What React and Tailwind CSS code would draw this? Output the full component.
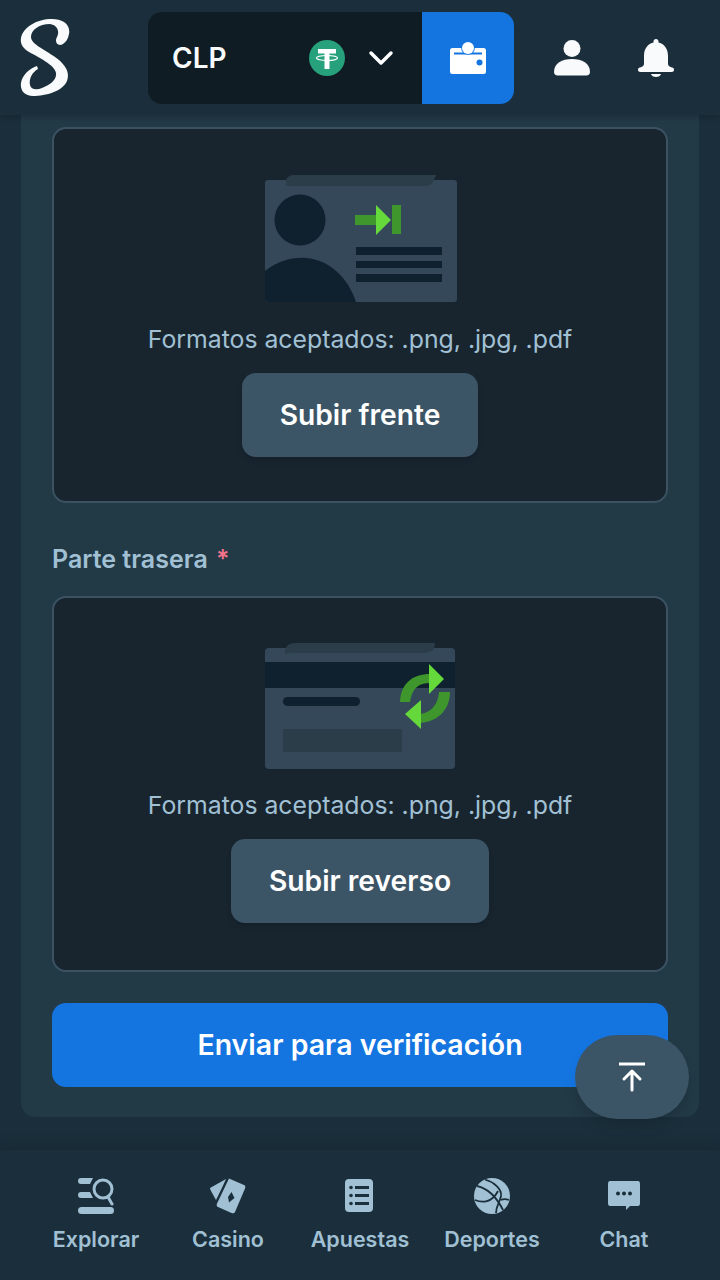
import React from 'react'

const Logo = () => (
  <svg width="50" height="78" viewBox="20 19 50 78" fill="#f8fafc">
    <path d="M63 44 C58 47 54 42 57 37 C60 31 57 25 50 24 C39 24 31 30 31 37 C31 44 44 49 55 57 C66 65 70 72 67 81 C63 91 46 96 33 96 C24 96 20 90 21 83 C22 75 30 68 37 66 L38 69 C31 73 29 80 30 85 C31 90 37 90 42 88 C50 85 57 80 56 73 C55 65 38 57 29 52 C23 48 20 44 21 38 C23 27 37 19 52 19 C62 19 71 24 69 34 C68 39 66 42 63 44 Z" />
  </svg>
)

const TetherIcon = () => (
  <svg width="36" height="36" viewBox="0 0 36 36">
    <circle cx="18" cy="18" r="18" fill="#26a17b" />
    <path d="M9 9h18v4.500h-6.500V29h-5V13.500H9z" fill="#fff" />
    <ellipse cx="18" cy="18" rx="10.500" ry="2.500" fill="none" stroke="#fff" strokeWidth="1.200" />
  </svg>
)

const WalletIcon = () => (
  <svg width="36" height="32" viewBox="0 0 36 32">
    <rect x="0" y="6" width="36" height="26" rx="2.500" fill="#fff" />
    <rect x="4" y="10.500" width="28" height="2" fill="#1475e1" />
    <circle cx="18" cy="6" r="6.800" fill="#1475e1" />
    <circle cx="18" cy="6" r="6" fill="#fff" />
    <circle cx="29.500" cy="20.500" r="3" fill="#1475e1" />
  </svg>
)

const UserIcon = () => (
  <svg width="36" height="36" viewBox="0 0 36 36" fill="#f8fafc">
    <circle cx="18" cy="8.500" r="8.500" />
    <path d="M0 32c0-9 8-13 18-13s18 4 18 13c0 2-1.500 3.500-3.500 3.500h-29C1.500 35.500 0 34 0 32z" />
  </svg>
)

const BellIcon = () => (
  <svg width="36" height="38" viewBox="0 0 36 38" fill="#f8fafc">
    <path d="M18 0c1.500 0 2.500 1 2.500 2.500v1C27 5 30 10.500 30 17v8c0 2 2 3 4 3.500 1.500.4 2 1.200 2 2.200 0 1.300-1 2.300-2.300 2.300H2.300C1 33 0 32 0 30.700c0-1 .5-1.800 2-2.200C4 28 6 27 6 25v-8C6 10.500 9 5 15.500 3.500v-1C15.500 1 16.500 0 18 0z" />
    <path d="M13 35h10c-.5 2-2.500 3-5 3s-4.500-1-5-3z" />
  </svg>
)

const IdFront = () => (
  <svg width="194" height="128" viewBox="-1 0 194 128">
    <rect x="1" y="6" width="192" height="122" rx="3" fill="#344859" />
    <path d="M22 6 Q24 1 30 1 H172 L169 8 Q167 12 160 12 H22z" fill="#2b3d48" />
    <circle cx="36" cy="46" r="25.500" fill="#0f212e" />
    <path d="M1 115 V97 C14 87 28 83 42 84 C66 86 84 104 92 128 H4 Q1 128 1 125z" fill="#0f212e" />
    <rect x="91" y="41" width="23" height="10" fill="#3e962c" />
    <path d="M112 31 L127 46 L112 61z" fill="#65d83c" />
    <rect x="128" y="31" width="9" height="29" fill="#3e962c" />
    <rect x="92" y="73" width="86" height="8" fill="#0f212e" />
    <rect x="92" y="87" width="86" height="7" fill="#0f212e" />
    <rect x="92" y="100" width="86" height="8" fill="#0f212e" />
  </svg>
)

const IdBack = () => (
  <svg width="194" height="128" viewBox="0 0 194 128">
    <rect x="2" y="6" width="190" height="121" rx="4" fill="#344859" />
    <path d="M22 12 V8 Q24 1 32 1 H172 L171 7 Q167 11 160 11 H28z" fill="#2b3d48" />
    <rect x="2" y="20" width="190" height="26" fill="#0f212e" />
    <rect x="20" y="55" width="77" height="9" rx="4.500" fill="#0f212e" />
    <rect x="20" y="87" width="119" height="23" fill="#2b3d48" />
    <path d="M137 60 C138 41 150 32 167 32 V41 C156 41 149 46 147 60z" fill="#3e962c" />
    <path d="M166 22 L181 37 L166 52z" fill="#65d83c" />
    <path d="M187 50 C187 70 172 81 155 81 V72 C165 72 175 65 176 50z" fill="#3e962c" />
    <path d="M158 58 L142 72 L158 87z" fill="#65d83c" />
  </svg>
)

const ExploreIcon = () => (
  <svg width="36" height="36" viewBox="0 0 36 36" fill="#a1c0d4">
    <path d="M3 0 H15 L12 6 H3 A3 3 0 0 1 3 0z" />
    <path d="M3 14 H12 L15 20 H3 A3 3 0 0 1 3 14z" />
    <rect x="0" y="29" width="36" height="7" rx="3.500" />
    <circle cx="25" cy="11" r="9" fill="none" stroke="#a1c0d4" strokeWidth="3" />
    <path d="M30 19 L34 26" stroke="#a1c0d4" strokeWidth="3" strokeLinecap="round" />
  </svg>
)

const CasinoIcon = () => (
  <svg width="36" height="36" viewBox="0 0 36 36" fill="#a1c0d4">
    <path d="M0 10 L16 1 Q12 10 6 22 L1 13 Q0 11 0 10z" />
    <path d="M19 .5 L34 7 Q36 8 35 10.500 L25 34 Q24 36 21.500 35 L8 29 Q6 28 7 25.500z" />
    <path d="M21.500 14 L24.500 20 L19 24.500 L18 19z" fill="#1a2f3b" />
  </svg>
)

const BetsIcon = () => (
  <svg width="30" height="34" viewBox="0 0 30 34">
    <rect x="0" y="0" width="28" height="33" rx="4" fill="#a1c0d4" />
    <g fill="#1a2f3b">
      <circle cx="6" cy="8.500" r="1.800" />
      <circle cx="6" cy="16.500" r="1.800" />
      <circle cx="6" cy="24.500" r="1.800" />
      <rect x="10" y="7" width="14" height="3" />
      <rect x="10" y="15" width="14" height="3" />
      <rect x="10" y="23" width="14" height="3" />
    </g>
  </svg>
)

const SportsIcon = () => (
  <svg width="36" height="36" viewBox="0 0 36 36">
    <circle cx="18" cy="18" r="18" fill="#a1c0d4" />
    <g fill="none" stroke="#1a2f3b" strokeWidth="1.800">
      <path d="M3 8 C12 10 22 18 29 32" />
      <path d="M11 1.500 C20 4 28 11 27 18 C26 24 22 28 22 35" />
      <path d="M1 22 C8 25 18 25 24 13" />
      <path d="M35 22 C32 21 29 21 27 22" />
    </g>
  </svg>
)

const ChatIcon = () => (
  <svg width="34" height="30" viewBox="0 0 34 30">
    <path d="M3 0 H31 Q33 0 33 3 V22 Q33 25 31 25 H23 L19 29 V25 H3 Q1 25 1 22 V3 Q1 0 3 0z" fill="#a1c0d4" />
    <circle cx="11" cy="12.500" r="2" fill="#1a2f3b" />
    <circle cx="17" cy="12.500" r="2" fill="#1a2f3b" />
    <circle cx="23" cy="12.500" r="2" fill="#1a2f3b" />
  </svg>
)

const NavItem = ({ icon, label }) => (
  <div className="flex w-[132px] flex-col items-center">
    <div className="flex h-[36px] items-center justify-center">{icon}</div>
    <span className="mt-[11px] text-[21.500px] leading-[28px] font-semibold text-[#a1c0d4]">{label}</span>
  </div>
)

const UploadBox = ({ art, button, top, gap }) => (
  <div className={`flex h-[376px] w-full flex-col items-center rounded-[14px] border-2 border-[#3a5261] bg-[#18252f] ${top}`}>
    {art}
    <p className={`text-[24.800px] leading-[34px] text-[#a1c0d4] ${gap}`}>Formatos aceptados: .png, .jpg, .pdf</p>
    <button className="mt-[17px] h-[84px] rounded-[14px] bg-[#3c5566] px-[38px] text-[28.200px] font-semibold text-white shadow-md">
      {button}
    </button>
  </div>
)

export default function App() {
  return (
    <div className="relative flex h-[1280px] w-[720px] flex-col overflow-hidden bg-[#1a2f3b] font-['Inter',sans-serif]">
      <header className="z-10 flex h-[115px] shrink-0 items-center bg-[#1a2f3b] pt-[1px] shadow-md">
        <div className="ml-[20px] w-[128px]"><Logo /></div>
        <div className="flex h-[92px] w-[366px] overflow-hidden rounded-[14px]">
          <div className="flex flex-1 items-center bg-[#0f1c24] pl-[24px]">
            <span className="w-[137px] text-[28px] font-semibold text-[#f8fafc]">CLP</span>
            <TetherIcon />
            <svg className="ml-[22px]" width="28" height="18" viewBox="0 0 28 18" fill="none" stroke="#fff" strokeWidth="3.500" strokeLinecap="round" strokeLinejoin="round">
              <path d="M4 4 L14 14 L24 4" />
            </svg>
          </div>
          <div className="flex w-[92px] items-center justify-center bg-[#1475e1]"><WalletIcon /></div>
        </div>
        <div className="ml-[40px]"><UserIcon /></div>
        <div className="ml-[48px]"><BellIcon /></div>
      </header>

      <main className="mx-[21px] shrink-0 rounded-b-[14px] bg-[#223946] px-[31px] pt-[12px] pb-[30px]">
        <UploadBox art={<IdFront />} button="Subir frente" top="pt-[45px]" gap="mt-[20px]" />
        <p className="mt-[39px] mb-[20px] text-[25px] leading-[34px] font-semibold text-[#a1c0d4]">
          Parte trasera <span className="ml-[2px] text-[#f0728a]">*</span>
        </p>
        <UploadBox art={<IdBack />} button="Subir reverso" top="pt-[44px]" gap="mt-[18px]" />
        <button className="mt-[31px] h-[84px] w-full rounded-[14px] bg-[#1475e1] text-[28.500px] font-semibold text-white">
          Enviar para verificación
        </button>
      </main>

      <nav className="z-10 mt-[33px] flex h-[130px] items-start justify-center bg-[#1a2f3b] pt-[28px] shadow-[0_-6px_12px_rgba(0,0,0,0.12)]">
        <NavItem icon={<ExploreIcon />} label="Explorar" />
        <NavItem icon={<CasinoIcon />} label="Casino" />
        <NavItem icon={<BetsIcon />} label="Apuestas" />
        <NavItem icon={<SportsIcon />} label="Deportes" />
        <NavItem icon={<ChatIcon />} label="Chat" />
      </nav>

      <button className="absolute top-[1035px] left-[575px] z-20 flex h-[84px] w-[114px] items-center justify-center rounded-[42px] bg-[#3c5566] shadow-lg">
        <svg width="30" height="30" viewBox="0 0 30 30" fill="none" stroke="#fff" strokeWidth="3" strokeLinecap="round" strokeLinejoin="round">
          <path d="M2 2 H28" strokeLinecap="butt" />
          <path d="M15 28 V10 M7 17 L15 9 L23 17" />
        </svg>
      </button>
    </div>
  )
}
